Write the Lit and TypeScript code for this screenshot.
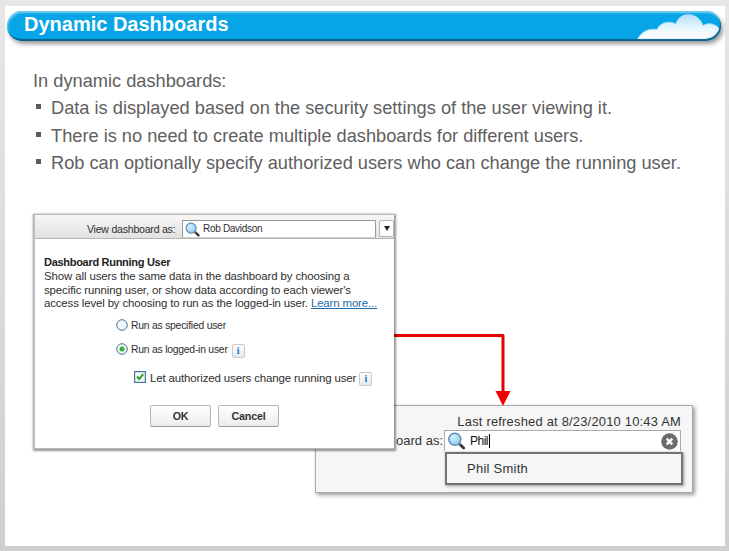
import { LitElement, html, css, svg } from "lit";
import { customElement, property } from "lit/decorators.js";

@customElement("magnifier-icon")
class MagnifierIcon extends LitElement {
  static styles = css`
    :host { display: block; flex: none; }
    svg { display: block; width: 100%; height: 100%; }
  `;
  render() {
    return html`<svg viewBox="0 0 18 18">
      <defs>
        <radialGradient id="lens" cx="35%" cy="30%" r="75%">
          <stop offset="0" stop-color="#d8f0fc" />
          <stop offset="1" stop-color="#8ccbf0" />
        </radialGradient>
      </defs>
      <path d="M11.500 11.500 L16.2 16" stroke="#34383c" stroke-width="2.8" stroke-linecap="round" />
      <path d="M11.2 10.8 L13 12.6" stroke="#8b98a4" stroke-width="1.4" />
      <circle cx="7.3" cy="7.3" r="6" fill="url(#lens)" stroke="#5b8fb5" stroke-width="1.4" />
    </svg>`;
  }
}

@customElement("info-badge")
class InfoBadge extends LitElement {
  static styles = css`
    :host {
      display: flex; flex: none; box-sizing: border-box; width: 13px; height: 14px;
      align-items: center; justify-content: center;
      border: 1px solid #c3cad0; border-radius: 2px;
      background: linear-gradient(#fcfdfe, #e6ebf0);
      font: bold 10px/12px "Liberation Serif", serif; color: #2370b8;
    }
  `;
  render() {
    return html`i`;
  }
}

@customElement("running-user-dialog")
class RunningUserDialog extends LitElement {
  static styles = css`
    :host {
      display: flex; flex-direction: column; box-sizing: border-box;
      width: 361px; height: 235px; background: #fff;
      border: solid #bcbcbc; border-width: 1px 0 1px 2px;
      box-shadow: 1px 1px 2px 1px rgba(0, 0, 0, 0.42);
      font-family: "Liberation Sans", Arial, sans-serif; color: #2e2e2e; white-space: nowrap;
    }
    .bar {
      display: flex; box-sizing: border-box; height: 24px; padding: 5px 0 0 52px;
      background: linear-gradient(#f7f7f7, #e2e2e2); border-bottom: 1px solid #b5b5b5;
    }
    .bar-label { width: 95px; font-size: 10.6px; letter-spacing: -0.25px; line-height: 18px; }
    .field {
      display: flex; box-sizing: border-box; width: 194px; height: 18px; padding-left: 2px; gap: 3px;
      background: #fff; border: 1px solid #999; border-bottom-color: #ccc;
      font-size: 10px; letter-spacing: -0.3px; line-height: 15px;
    }
    .field magnifier-icon { width: 15px; height: 15px; margin-top: 1px; }
    .drop {
      display: flex; align-items: center; justify-content: center; box-sizing: border-box;
      width: 15px; height: 17px; margin-left: 3px; background: #fdfdfd;
      border: 1px solid #b5b5b5; border-radius: 2px;
    }
    .drop svg { width: 6px; height: 5px; }
    .body { padding: 16px 0 0 9px; }
    .title { font-size: 11px; letter-spacing: -0.29px; font-weight: bold; line-height: 15px; color: #222; }
    .copy { font-size: 11.4px; letter-spacing: -0.09px; line-height: 13.7px; }
    .last { letter-spacing: -0.12px; }
    .link { color: #1c6ba8; text-decoration: underline; }
    .options { display: flex; flex-direction: column; }
    .option {
      display: flex; align-items: center; gap: 3px; height: 14px; margin: 7px 0 0 72px;
      font-size: 10.4px; letter-spacing: -0.24px;
    }
    .option + .option { margin-top: 10px; }
    .radio { width: 12px; height: 12px; flex: none; }
    .option info-badge { margin: 3px 0 0 1px; }
    .option.check.check { margin: 15px 0 0 90px; font-size: 11.5px; letter-spacing: -0.15px; gap: 4px; }
    .option.check info-badge { margin: 2px 0 0 -1px; }
    .check-box { width: 12px; height: 12px; flex: none; margin-top: -3px; }
    .actions { display: flex; gap: 7px; margin: 20px 0 0 106px; }
    .button {
      box-sizing: border-box; width: 61px; height: 22px; text-align: center;
      border: 1px solid #b5b5b5; border-bottom-color: #999; border-radius: 2px;
      background: linear-gradient(#fff, #ececec); font-size: 10.7px; letter-spacing: -0.2px;
      line-height: 21px; font-weight: bold; color: #333;
    }
  `;
  render() {
    return html`
      <div class="bar">
        <span class="bar-label">View dashboard as:</span>
        <div class="field"><magnifier-icon></magnifier-icon><span>Rob Davidson</span></div>
        <div class="drop"><svg viewBox="0 0 6 5"><path d="M0 0H6L3 5Z" fill="#222" /></svg></div>
      </div>
      <div class="body">
        <div class="title">Dashboard Running User</div>
        <div class="copy">
          Show all users the same data in the dashboard by choosing a<br />
          specific running user, or show data according to each viewer's<br />
          <span class="last">access level by choosing to run as the logged-in user. <span class="link">Learn more...</span></span>
        </div>
        <div class="options">
          <div class="option">${this.radio(false)}<span>Run as specified user</span></div>
          <div class="option">${this.radio(true)}<span>Run as logged-in user</span><info-badge></info-badge></div>
          <div class="option check">
            <svg class="check-box" viewBox="0 0 12 12">
              <rect x=".6" y=".6" width="10.8" height="10.8" fill="#f4f8f2" stroke="#47789f" stroke-width="1.2" />
              <path d="M3 5.5L5.2 8L9.2 3.2" fill="none" stroke="#2ba32b" stroke-width="2" />
            </svg>
            <span>Let authorized users change running user</span><info-badge></info-badge>
          </div>
        </div>
        <div class="actions">
          <div class="button">OK</div>
          <div class="button">Cancel</div>
        </div>
      </div>
    `;
  }
  private radio(on: boolean) {
    return html`<svg class="radio" viewBox="0 0 12 12">
      <circle cx="6" cy="6" r="5.3" fill="#f1f5f8" stroke="#47789f" />
      ${on ? svg`<circle cx="6" cy="6" r="2.5" fill="#35b035" />` : null}
    </svg>`;
  }
}

@customElement("user-lookup")
class UserLookup extends LitElement {
  static styles = css`
    :host {
      display: flex; flex-direction: column; align-items: flex-end; box-sizing: border-box;
      width: 378px; height: 88px; padding: 8px 11px 0 0; background: #f6f6f6;
      border: 1px solid #aaa; box-shadow: 2px 2px 4px rgba(0, 0, 0, 0.4);
      font: 13px/15px "Liberation Sans", Arial, sans-serif; color: #333; white-space: nowrap;
    }
    .stamp { font-size: 12.9px; letter-spacing: 0.22px; height: 16px; }
    .row { display: flex; }
    .label { line-height: 22px; margin-right: 1px; }
    .field {
      display: flex; align-items: center; box-sizing: border-box; width: 237px; height: 21px; padding: 0 2px 0 2px;
      border: 1px solid #aaa; border-bottom: 0; background: #fff; font-size: 12px; color: #111;
    }
    .field magnifier-icon { width: 19px; height: 18px; }
    .query { margin-left: 4px; letter-spacing: -0.5px; padding-right: 1px; border-right: 1px solid #000; line-height: 14px; }
    .clear { width: 17px; height: 17px; margin-left: auto; }
    .menu {
      box-sizing: border-box; width: 238px; height: 33px; padding-left: 20px; margin-right: -2px;
      border: 2px solid #737373; background: #f6f6f6; box-shadow: 1px 1px 3px rgba(0, 0, 0, 0.4);
      line-height: 30px; letter-spacing: 0.25px;
    }
  `;
  render() {
    return html`
      <div class="stamp">Last refreshed at 8/23/2010 10:43 AM</div>
      <div class="row">
        <span class="label">oard as:</span>
        <div class="field">
          <magnifier-icon></magnifier-icon><span class="query">Phil</span>
          <svg class="clear" viewBox="0 0 17 17">
            <circle cx="8.5" cy="8.5" r="8.3" fill="#6c6c6c" />
            <path d="M5.7 5.7L11.3 11.3M11.3 5.7L5.7 11.3" stroke="#fff" stroke-width="2.4" />
          </svg>
        </div>
      </div>
      <div class="menu">Phil Smith</div>
    `;
  }
}

@customElement("app-root")
class AppRoot extends LitElement {
  @property({ attribute: false })
  points = [
    "Data is displayed based on the security settings of the user viewing it.",
    "There is no need to create multiple dashboards for different users.",
    "Rob can optionally specify authorized users who can change the running user.",
  ];

  static styles = css`
    :host {
      display: block; box-sizing: border-box; width: 729px; height: 551px; padding: 6px 4px 5px 5px; overflow: hidden;
      background: linear-gradient(#e7e7e7, #cfcfcf); font-family: "Liberation Sans", Arial, sans-serif;
    }
    .slide { position: relative; box-sizing: border-box; height: 540px; padding: 5px 3px 0 2px; background: #fff; }
    .header {
      display: flex; justify-content: space-between; box-sizing: border-box; height: 30px; width: 714px; padding-left: 17px;
      border-radius: 15px; overflow: hidden; background: #05a5e8; color: #fff;
      font-size: 20px; font-weight: bold; line-height: 27px;
    }
    .header-wrap {
      width: 714px; border-radius: 15px; box-shadow: 2px 3px 4px rgba(0, 0, 0, 0.4); position: relative;
    }
    .header-wrap::after {
      content: ""; position: absolute; inset: 0; border-radius: 15px;
      box-shadow: inset -1px -2px 1px #076089, inset 1px 2px 2px #7bcdf0;
    }
    .cloud { width: 86px; height: 30px; }
    .content { padding: 26px 0 0 26px; font-size: 18.23px; line-height: 27.3px; color: #606060; white-space: nowrap; }
    .point { display: flex; align-items: center; height: 27.3px; }
    .bullet { width: 5px; height: 5px; margin: 0 10px 2px 3px; background: #5c5c5c; }
    .lookup { position: absolute; left: 310px; top: 399px; }
    .arrow { position: absolute; left: 388px; top: 324px; width: 122px; height: 78px; }
    .dialog { position: absolute; left: 28px; top: 208px; }
  `;

  render() {
    return html`
      <div class="slide">
        <div class="header-wrap">
          <div class="header">
            <span>Dynamic Dashboards</span>
            <svg class="cloud" viewBox="0 0 86 30">
              <defs>
                <linearGradient id="puff" x1="0" y1="0" x2="0" y2="1">
                  <stop offset="0" stop-color="#b4e1f7" />
                  <stop offset=".55" stop-color="#eaf7fd" />
                  <stop offset="1" stop-color="#fff" />
                </linearGradient>
              </defs>
              <path
                d="M2 29C6 21 13 17 22 18.500C25 11 35 9.500 41 13C44 0.500 63 0 68 14.500C74 11 82 13 85 19L84 29Z"
                fill="url(#puff)" stroke="#a6dcf6" stroke-width=".8"
              />
            </svg>
          </div>
        </div>
        <div class="content">
          <div>In dynamic dashboards:</div>
          ${this.points.map((p) => html`<div class="point"><span class="bullet"></span><span>${p}</span></div>`)}
        </div>
        <user-lookup class="lookup"></user-lookup>
        <svg class="arrow" viewBox="0 0 122 78">
          <path d="M0 5.5H110V62" fill="none" stroke="#e60000" stroke-width="3" stroke-linejoin="round" />
          <path d="M102.5 61H117.500L110 76Z" fill="#f00000" />
        </svg>
        <running-user-dialog class="dialog"></running-user-dialog>
      </div>
    `;
  }
}
